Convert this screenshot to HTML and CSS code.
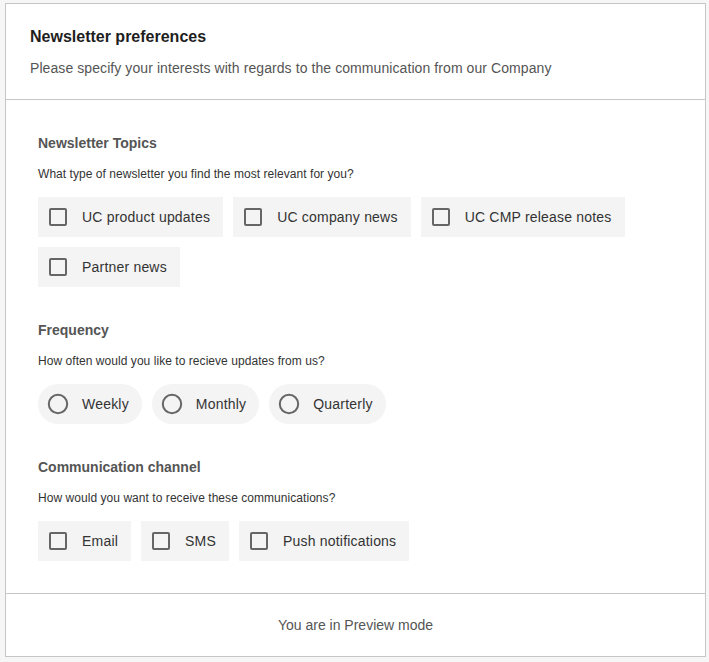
FILE: index.html
```html
<!DOCTYPE html>
<html lang="en">
<head>
<meta charset="utf-8">
<title>Newsletter preferences</title>
<link rel="stylesheet" href="styles.css">
</head>
<body>
<div class="card">
  <header class="card-header">
    <h1 class="title">Newsletter preferences</h1>
    <p class="subtitle">Please specify your interests with regards to the communication from our Company</p>
  </header>
  <main class="card-body">
    <section class="group">
      <h2 class="group-title">Newsletter Topics</h2>
      <p class="group-desc">What type of newsletter you find the most relevant for you?</p>
      <div class="options">
        <label class="option"><svg class="icon" viewBox="0 0 24 24"><rect x="4" y="4" width="16" height="16" rx="1"/></svg><span>UC product updates</span></label>
        <label class="option"><svg class="icon" viewBox="0 0 24 24"><rect x="4" y="4" width="16" height="16" rx="1"/></svg><span>UC company news</span></label>
        <label class="option"><svg class="icon" viewBox="0 0 24 24"><rect x="4" y="4" width="16" height="16" rx="1"/></svg><span>UC CMP release notes</span></label>
        <label class="option"><svg class="icon" viewBox="0 0 24 24"><rect x="4" y="4" width="16" height="16" rx="1"/></svg><span>Partner news</span></label>
      </div>
    </section>
    <section class="group">
      <h2 class="group-title">Frequency</h2>
      <p class="group-desc">How often would you like to recieve updates from us?</p>
      <div class="options">
        <label class="option radio"><svg class="icon" viewBox="0 0 24 24"><circle cx="12" cy="12" r="9.2"/></svg><span>Weekly</span></label>
        <label class="option radio"><svg class="icon" viewBox="0 0 24 24"><circle cx="12" cy="12" r="9.2"/></svg><span>Monthly</span></label>
        <label class="option radio"><svg class="icon" viewBox="0 0 24 24"><circle cx="12" cy="12" r="9.2"/></svg><span>Quarterly</span></label>
      </div>
    </section>
    <section class="group">
      <h2 class="group-title">Communication channel</h2>
      <p class="group-desc">How would you want to receive these communications?</p>
      <div class="options">
        <label class="option"><svg class="icon" viewBox="0 0 24 24"><rect x="4" y="4" width="16" height="16" rx="1"/></svg><span>Email</span></label>
        <label class="option"><svg class="icon" viewBox="0 0 24 24"><rect x="4" y="4" width="16" height="16" rx="1"/></svg><span>SMS</span></label>
        <label class="option"><svg class="icon" viewBox="0 0 24 24"><rect x="4" y="4" width="16" height="16" rx="1"/></svg><span>Push notifications</span></label>
      </div>
    </section>
  </main>
  <footer class="card-footer">You are in Preview mode</footer>
</div>
</body>
</html>
```
FILE: styles.css
```css
html, body {
  margin: 0;
  padding: 0;
}
body {
  background: #f6f6f6;
  font-family: "Liberation Sans", Arial, sans-serif;
  color: #333;
}
.card {
  margin: 3px 3px 5px 5px;
  background: #fff;
  border: 1px solid #c6c6c6;
}
.card-header {
  padding: 23px 24px 21px;
  border-bottom: 1px solid #c6c6c6;
}
.title {
  margin: 0;
  font-size: 16px;
  line-height: 20px;
  font-weight: bold;
  color: #1e1e1e;
}
.subtitle {
  margin: 11px 0 0;
  font-size: 14px;
  line-height: 20px;
  letter-spacing: 0.08px;
  color: #555;
}
.card-body {
  padding: 0 32px 32px;
  display: flex;
  flex-direction: column;
}
.group {
  padding-top: 33px;
}
.group-title {
  margin: 0;
  font-size: 14px;
  line-height: 20px;
  font-weight: bold;
  color: #555;
}
.group-desc {
  margin: 13px 0 0;
  font-size: 12px;
  line-height: 16px;
  letter-spacing: 0.05px;
  color: #333;
}
.options {
  margin-top: 15px;
  display: flex;
  flex-wrap: wrap;
  gap: 10px;
}
.option {
  display: flex;
  align-items: center;
  gap: 12px;
  padding: 8px 13px 8px 8px;
  background: #f4f4f4;
  font-size: 14px;
  line-height: 20px;
  letter-spacing: 0.2px;
  color: #333;
}
.option.radio {
  border-radius: 20px;
}
.icon {
  width: 24px;
  height: 24px;
  flex: none;
  fill: none;
  stroke: #666;
  stroke-width: 2;
}
.card-footer {
  border-top: 1px solid #c6c6c6;
  height: 62px;
  display: flex;
  align-items: center;
  justify-content: center;
  font-size: 14px;
  color: #555;
}
```
